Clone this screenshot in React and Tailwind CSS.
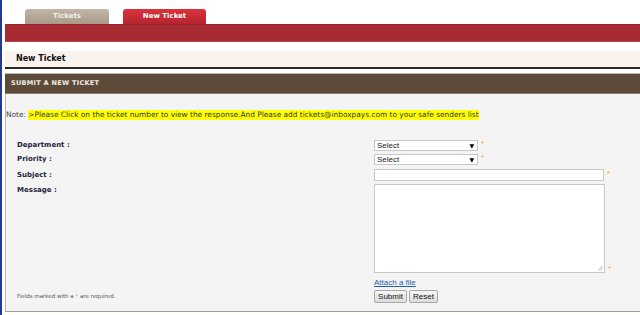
import React from "react";

const verdana = { fontFamily: '"DejaVu Sans", Verdana, sans-serif' };
const arial = { fontFamily: '"Liberation Sans", Arial, sans-serif' };

function Star({ className = "" }) {
  return <span className={"text-[#f5a53a] text-[8px] leading-none " + className} style={arial}>*</span>;
}

function FakeSelect() {
  return (
    <div className="w-[104px] h-[11px] bg-white border border-[#c8c8c8] flex items-center justify-between px-[2px]">
      <span className="text-[8px] leading-none text-[#222]" style={arial}>Select</span>
      <span className="text-[6px] leading-none text-black mr-[1px]">▼</span>
    </div>
  );
}

export default function App() {
  return (
    <div className="w-[640px] h-[315px] bg-white flex overflow-hidden">
      <div className="w-[2px] h-full bg-[#233a8f] shrink-0" />
      <div className="flex-1 ml-[3px] flex flex-col" style={verdana}>
        {/* tabs */}
        <div className="h-[24px] flex items-end pl-[20px] gap-[14px]">
          <div className="w-[84px] h-[15px] rounded-t-[3px] bg-gradient-to-b from-[#c2b6a6] to-[#a99a88] flex items-center justify-center">
            <span className="text-[7px] font-bold text-[#f3eee8]">Tickets</span>
          </div>
          <div className="w-[83px] h-[15px] rounded-t-[3px] bg-gradient-to-b from-[#dc323b] to-[#b4252f] flex items-center justify-center">
            <span className="text-[7px] font-bold text-white">New Ticket</span>
          </div>
        </div>
        {/* red bar */}
        <div className="h-[18px] bg-[#a62b33] border-t border-[#9a2430] border-b border-b-[#c2444c]" />
        <div className="h-[9px]" />
        {/* header */}
        <div className="h-[16px] bg-[#faf2ec] flex items-center pl-[11px]">
          <span className="text-[8px] font-bold text-[#111]">New Ticket</span>
        </div>
        <div className="h-[2px] bg-[#2a2a2a]" />
        <div className="h-[4px]" />
        {/* brown bar */}
        <div className="h-[21px] bg-[#5d4b3a] border-t border-[#b8b8b8] border-b border-b-[#8a7a6a] flex items-center pl-[6px]">
          <span className="text-[6.5px] font-bold text-[#f2ece6] tracking-[0.3px]">SUBMIT A NEW TICKET</span>
        </div>
        {/* panel */}
        <div className="bg-[#f4f4f4] border-l border-[#b8b8b8] border-b border-b-[#a89a88] flex flex-col pb-[8px]">
          <div className="mt-[16px] h-[10px] flex items-center text-[7.4px] leading-none whitespace-nowrap">
            <span className="text-[#444]">Note:&nbsp;</span>
            <span className="bg-[#ffff00] text-[#333] py-[1px]">&gt;Please Click on the ticket number to view the response.And Please add tickets@inboxpays.com to your safe senders list</span>
          </div>

          <div className="mt-[20px] flex items-center h-[11px]">
            <div className="w-[368px] pl-[11px] text-[7px] font-bold text-[#1c1f3a]">Department :</div>
            <FakeSelect />
            <Star className="ml-[3px] -mt-[3px]" />
          </div>
          <div className="mt-[3px] flex items-center h-[11px]">
            <div className="w-[368px] pl-[11px] text-[7px] font-bold text-[#1c1f3a]">Priority :</div>
            <FakeSelect />
            <Star className="ml-[3px] -mt-[3px]" />
          </div>
          <div className="mt-[4px] flex items-center h-[12px]">
            <div className="w-[368px] pl-[11px] text-[7px] font-bold text-[#1c1f3a]">Subject :</div>
            <div className="w-[230px] h-[12px] bg-white border border-[#c8c8c8]" />
            <Star className="ml-[3px] -mt-[3px]" />
          </div>
          <div className="mt-[3px] flex items-start">
            <div className="w-[368px] pl-[11px] pt-[1px] text-[7px] font-bold text-[#1c1f3a]">Message :</div>
            <div className="relative w-[231px] h-[89px] bg-white border border-[#c8c8c8]">
              <svg className="absolute right-[1px] bottom-[1px]" width="6" height="6" viewBox="0 0 6 6">
                <path d="M5.5 1 L1 5.5 M5.5 3 L3 5.5" stroke="#aaa" strokeWidth="0.8" />
              </svg>
            </div>
            <Star className="ml-[3px] mt-[81px]" />
          </div>
          <div className="mt-[5px] flex h-[10px] items-center">
            <div className="w-[368px]" />
            <a href="#" className="text-[8px] leading-none text-[#1d5fa8] underline" style={arial}>Attach a file</a>
          </div>
          <div className="mt-[2px] flex items-center h-[13px]">
            <div className="w-[368px] pl-[11px] text-[5.5px] text-[#555]">
              Fields marked with a <span className="text-[#f5a53a]">*</span> are required.
            </div>
            <div className="flex gap-[2px]">
              <div className="w-[33px] h-[13px] border border-[#a8a8a8] rounded-[2px] bg-gradient-to-b from-[#f6f6f6] to-[#dcdcdc] flex items-center justify-center text-[8px] text-[#111]" style={arial}>Submit</div>
              <div className="w-[29px] h-[13px] border border-[#a8a8a8] rounded-[2px] bg-gradient-to-b from-[#f6f6f6] to-[#dcdcdc] flex items-center justify-center text-[8px] text-[#111]" style={arial}>Reset</div>
            </div>
          </div>
        </div>
      </div>
    </div>
  );
}
